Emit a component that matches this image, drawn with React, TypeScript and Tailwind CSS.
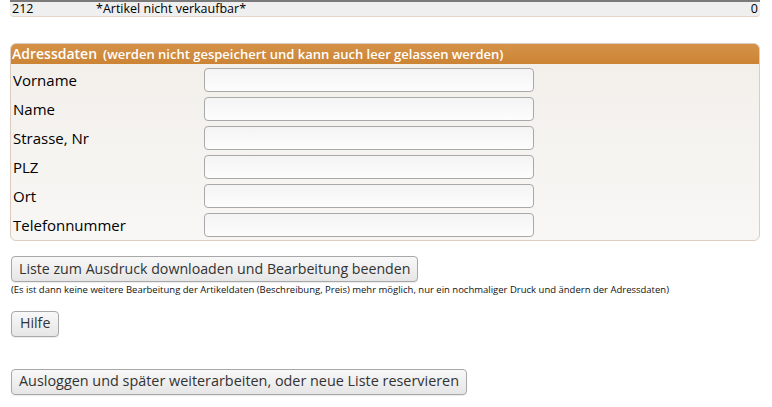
const fields = ["Vorname", "Name", "Strasse, Nr", "PLZ", "Ort", "Telefonnummer"];

const btn =
  "rounded-[4px] border border-[#a8a8a8] bg-gradient-to-b from-[#f8f8f8] to-[#e6e6e6] px-[7px] text-[#333] shadow-[0_1px_1px_rgba(0,0,0,0.08)]";

export default function App() {
  return (
    <div
      className="w-[772px] h-[407px] bg-white text-black overflow-hidden"
      style={{ fontFamily: '"Open Sans", "DejaVu Sans", sans-serif' }}
    >
      {/* article row */}
      <div className="mx-[10px] w-[750px] h-[17px] flex items-center border-t-2 border-[#7a7a7a] border-b border-b-[#e4d4c6] bg-[#efefef] rounded-b-[4px] text-[12.5px] leading-none px-[2px]">
        <span className="w-[84px]">212</span>
        <span className="flex-1">*Artikel nicht verkaufbar*</span>
        <span>0</span>
      </div>

      {/* address box */}
      <div className="mx-[10px] mt-[26px] w-[750px] rounded-[6px] border border-[#dccdc0] bg-gradient-to-b from-[#f2efea] to-[#f8f7f5] overflow-hidden">
        <div className="h-[20px] flex items-center gap-[6px] bg-gradient-to-b from-[#d49248] to-[#cc8434] px-[1px] text-white">
          <span className="text-[14px] font-semibold leading-none">Adressdaten</span>
          <span className="text-[13px] font-semibold leading-none">
            (werden nicht gespeichert und kann auch leer gelassen werden)
          </span>
        </div>
        <div className="flex flex-col gap-[5px] pt-[4px] pb-[3px]">
          {fields.map((f) => (
            <div key={f} className="flex items-center h-[24px]">
              <span className="w-[193px] pl-[2px] text-[15px] leading-none">{f}</span>
              <input className="w-[330px] h-[24px] rounded-[4px] border border-[#a9a9a9] bg-gradient-to-b from-[#f4f4f4] to-[#fdfdfd] outline-none" />
            </div>
          ))}
        </div>
      </div>

      <div className="mx-[11px] mt-[15px] flex flex-col items-start">
        <button className={`${btn} h-[26px] text-[14.2px] leading-none`}>
          Liste zum Ausdruck downloaden und Bearbeitung beenden
        </button>
        <p className="mt-[3px] text-[9.5px] leading-none text-[#111]">
          (Es ist dann keine weitere Bearbeitung der Artikeldaten (Beschreibung, Preis) mehr möglich, nur ein nochmaliger Druck und ändern der Adressdaten)
        </p>
        <button className={`${btn} mt-[16px] h-[26px] px-[8px] text-[14.2px] leading-none`}>Hilfe</button>
        <button className={`${btn} mt-[32px] h-[26px] text-[14.4px] leading-none`}>
          Ausloggen und später weiterarbeiten, oder neue Liste reservieren
        </button>
      </div>
    </div>
  );
}
